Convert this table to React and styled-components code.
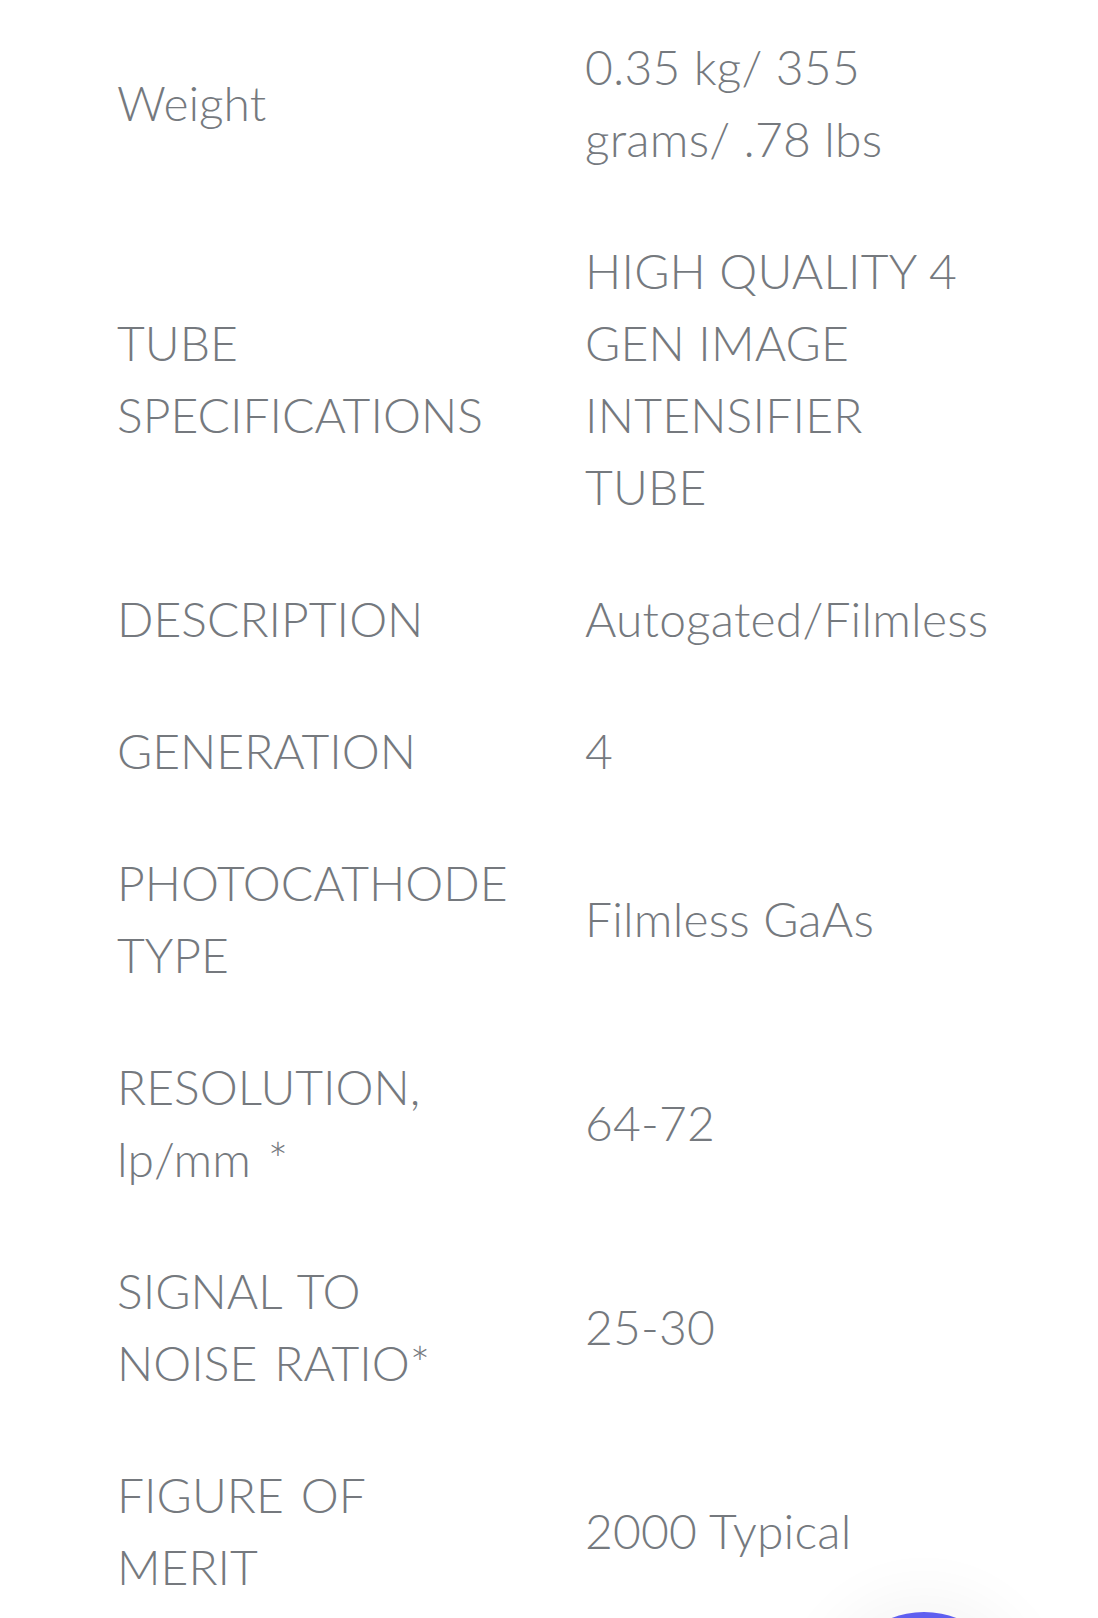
import React from "react";
import styled, { createGlobalStyle } from "styled-components";

const Global = createGlobalStyle`
  html, body { margin: 0; padding: 0; background: #ffffff; }
  body { overflow: hidden; }
`;

const Page = styled.div`
  position: relative;
  width: 1098px;
  height: 1618px;
  overflow: hidden;
  background: #ffffff;
  padding: 1px 0 0 117px;
  box-sizing: border-box;
  font-family: "Lato", "Open Sans", sans-serif;
  font-weight: 300;
  color: #75797e;
`;

const Table = styled.div`
  width: 894px;
  overflow: hidden;
  display: grid;
  grid-template-columns: 468px 380px;
`;

const Cell = styled.div`
  padding: 30px 0;
  font-size: 48px;
  line-height: 72px;
  display: flex;
  align-items: center;
  min-width: 0;
`;

const Label = styled(Cell)`
  padding-right: 72px;
  word-spacing: 4px;
`;

const Value = styled(Cell)`
  letter-spacing: 0.2px;
`;

const ChatBubble = styled.div`
  position: absolute;
  left: 834px;
  top: 1612px;
  width: 180px;
  height: 180px;
  border-radius: 50%;
  background: #5f5ff0;
  box-shadow: 0 0 60px 20px rgba(0, 0, 0, 0.04);
`;

const rows = [
  ["Weight", "0.35 kg/ 355 grams/ .78 lbs"],
  ["TUBE SPECIFICATIONS", "HIGH QUALITY 4 GEN IMAGE INTENSIFIER TUBE"],
  ["DESCRIPTION", "Autogated/Filmless"],
  ["GENERATION", "4"],
  ["PHOTOCATHODE TYPE", "Filmless GaAs"],
  ["RESOLUTION, lp/mm *", "64-72"],
  ["SIGNAL TO NOISE RATIO*", "25-30"],
  ["FIGURE OF MERIT", "2000 Typical"],
];

export default function App() {
  return (
    <>
      <Global />
      <Page>
        <Table>
          {rows.map(([l, v]) => (
            <React.Fragment key={l}>
              <Label>{l}</Label>
              <Value>{v}</Value>
            </React.Fragment>
          ))}
        </Table>
        <ChatBubble />
      </Page>
    </>
  );
}
